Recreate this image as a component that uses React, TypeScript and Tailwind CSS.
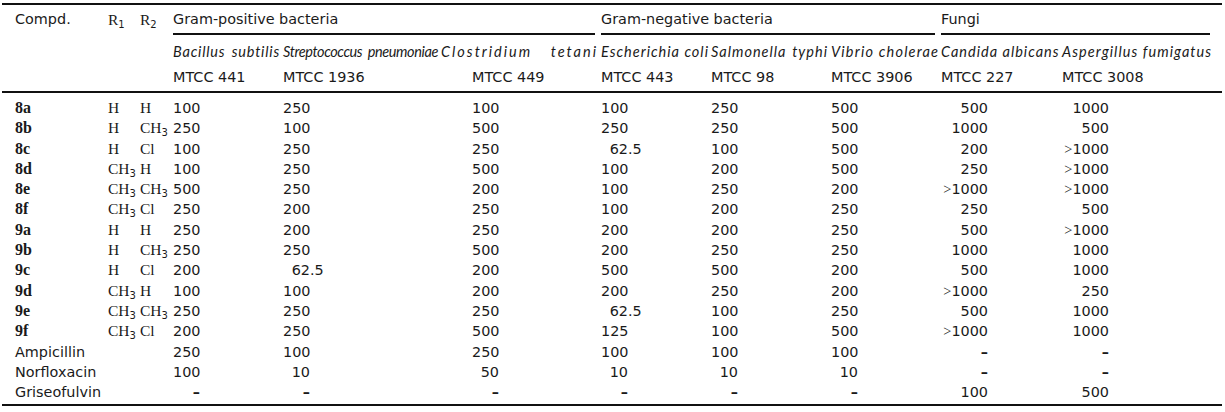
import type { ReactNode } from 'react';

const COLS = 'grid grid-cols-[106px_32px_33px_110px_158px_160px_110px_120px_110px_121px_160px]';
const SANS = "font-['DejaVu_Sans',sans-serif]";
const SERIF = "font-['Liberation_Serif',serif]";
const ITAL = "font-['Lato',sans-serif] italic text-[14.5px]";

// alignment box for the integer part of each value column
const BOX = [
  'w-[27px]',
  'w-[27px]',
  'ml-[31px] w-[27px]',
  'w-[27px]',
  'w-[27px]',
  'w-[27px]',
  'w-[47px]',
  'w-[47px]',
];

type Sub = 'H' | 'CH3' | 'Cl' | '';

interface Row {
  id:   string;
  bold: boolean;
  r1:   Sub;
  r2:   Sub;
  vals: string[];
}

const ROWS: Row[] = [
  { id: '8a', bold: true, r1: 'H',   r2: 'H',   vals: ['100', '250', '100', '100',  '250', '500', '500',   '1000'] },
  { id: '8b', bold: true, r1: 'H',   r2: 'CH3', vals: ['250', '100', '500', '250',  '250', '500', '1000',  '500'] },
  { id: '8c', bold: true, r1: 'H',   r2: 'Cl',  vals: ['100', '250', '250', '62.5', '100', '500', '200',   '>1000'] },
  { id: '8d', bold: true, r1: 'CH3', r2: 'H',   vals: ['100', '250', '500', '100',  '200', '500', '250',   '>1000'] },
  { id: '8e', bold: true, r1: 'CH3', r2: 'CH3', vals: ['500', '250', '200', '100',  '250', '200', '>1000', '>1000'] },
  { id: '8f', bold: true, r1: 'CH3', r2: 'Cl',  vals: ['250', '200', '250', '100',  '200', '250', '250',   '500'] },
  { id: '9a', bold: true, r1: 'H',   r2: 'H',   vals: ['250', '200', '250', '200',  '200', '250', '500',   '>1000'] },
  { id: '9b', bold: true, r1: 'H',   r2: 'CH3', vals: ['250', '250', '500', '200',  '250', '250', '1000',  '1000'] },
  { id: '9c', bold: true, r1: 'H',   r2: 'Cl',  vals: ['200', '62.5', '200', '500', '500', '200', '500',   '1000'] },
  { id: '9d', bold: true, r1: 'CH3', r2: 'H',   vals: ['100', '100', '200', '200',  '250', '200', '>1000', '250'] },
  { id: '9e', bold: true, r1: 'CH3', r2: 'CH3', vals: ['250', '250', '250', '62.5', '100', '250', '500',   '1000'] },
  { id: '9f', bold: true, r1: 'CH3', r2: 'Cl',  vals: ['200', '250', '500', '125',  '100', '500', '>1000', '1000'] },
  { id: 'Ampicillin',   bold: false, r1: '', r2: '', vals: ['250', '100', '250', '100', '100', '100', '–', '–'] },
  { id: 'Norfloxacin',  bold: false, r1: '', r2: '', vals: ['100', '10',  '50',  '10',  '10',  '10',  '–', '–'] },
  { id: 'Griseofulvin', bold: false, r1: '', r2: '', vals: ['–',   '–',   '–',   '–',   '–',   '–',   '100', '500'] },
];

const SPECIES: { name: string; cls: string }[] = [
  { name: 'Bacillus subtilis',        cls: 'col-start-4 w-[107px] tracking-[0.8px]' },
  { name: 'Streptococcus pneumoniae', cls: 'w-[155px] tracking-[-0.4px]' },
  { name: 'Clostridium tetani',       cls: 'w-[157px] tracking-[2px]' },
  { name: 'Escherichia coli',         cls: 'w-[107px] tracking-[1px]' },
  { name: 'Salmonella typhi',         cls: 'w-[117px] tracking-[1px]' },
  { name: 'Vibrio cholerae',          cls: 'w-[107px] tracking-[1.2px]' },
  { name: 'Candida albicans',         cls: 'w-[118px] tracking-[1px]' },
  { name: 'Aspergillus fumigatus',    cls: 'w-[149px] tracking-[1.05px]' },
];

const STRAINS: { name: string; cls: string }[] = [
  { name: 'MTCC 441',  cls: 'col-start-4' },
  { name: 'MTCC 1936', cls: '' },
  { name: 'MTCC 449',  cls: 'pl-[31px]' },
  { name: 'MTCC 443',  cls: '' },
  { name: 'MTCC 98',   cls: '' },
  { name: 'MTCC 3906', cls: '' },
  { name: 'MTCC 227',  cls: '' },
  { name: 'MTCC 3008', cls: '' },
];

function Subscript({ children }: { children: ReactNode }) {
  return <span className={`${SANS} text-[10px] leading-[0] align-[-3px]`}>{children}</span>;
}

function Substituent({ s }: { s: Sub }) {
  if (s === 'CH3') return <span className={SERIF}>CH<Subscript>3</Subscript></span>;
  return <span className={SERIF}>{s}</span>;
}

function Val({ v, box }: { v: string; box: string }) {
  let main: ReactNode = v;
  let frac = '';
  if (v === '–') {
    main = <span className="font-bold">–</span>;
  } else if (v.startsWith('>')) {
    main = <><span className={SERIF}>&gt;</span>{v.slice(1)}</>;
  } else if (v.includes('.')) {
    const [a, b] = v.split('.');
    main = a;
    frac = `.${b}`;
  }
  return (
    <div className="flex items-baseline whitespace-nowrap">
      <span className={`${box} text-right`}>{main}</span>
      {frac && <span>{frac}</span>}
    </div>
  );
}

export default function App() {
  return (
    <div className="w-[1225px] h-[412px] bg-white">
      <div className={`ml-[2px] mt-[3px] w-[1220px] border-y-2 border-[#111] text-[#1a1a1a] text-[14.4px] ${SANS}`}>
        {/* group headings */}
        <div className={`${COLS} items-start`}>
          <div className="h-[28px] pt-[2px] pl-[13px] flex items-center">Compd.</div>
          <div className="h-[28px] pt-[2px] flex items-center">
            <span><span className={`${SERIF} text-[15.5px]`}>R</span><Subscript>1</Subscript></span>
          </div>
          <div className="h-[28px] pt-[2px] flex items-center">
            <span><span className={`${SERIF} text-[15.5px]`}>R</span><Subscript>2</Subscript></span>
          </div>
          <div className="col-span-3 h-[30px] pt-[2px] mr-[6px] border-b-2 border-[#111] flex items-center">Gram-positive bacteria</div>
          <div className="col-span-3 h-[30px] pt-[2px] mr-[6px] border-b-2 border-[#111] flex items-center">Gram-negative bacteria</div>
          <div className="col-span-2 h-[30px] pt-[2px] mr-[12px] border-b-2 border-[#111] flex items-center">Fungi</div>
        </div>

        {/* species */}
        <div className={`${COLS} h-[29px] pt-[4px] items-center`}>
          {SPECIES.map((s) => (
            <div key={s.name} className={`${s.cls} ${ITAL} whitespace-nowrap [text-align-last:justify]`}>
              {s.name}
            </div>
          ))}
        </div>

        {/* strains */}
        <div className={`${COLS} h-[27px] items-center border-b-2 border-[#111] box-content`}>
          {STRAINS.map((s) => (
            <div key={s.name} className={`${s.cls} whitespace-nowrap`}>{s.name}</div>
          ))}
        </div>

        {/* data */}
        <div className="pt-[5px] pb-[2px]">
          {ROWS.map((r) => (
            <div key={r.id} className={`${COLS} h-[20.3px] items-baseline leading-[20px]`}>
              <div className="pl-[13px]">
                {r.bold ? <span className={`${SERIF} font-bold text-[16px]`}>{r.id}</span> : r.id}
              </div>
              <div className="text-[15.5px]"><Substituent s={r.r1} /></div>
              <div className="text-[15.5px]"><Substituent s={r.r2} /></div>
              {r.vals.map((v, i) => (
                <Val key={i} v={v} box={BOX[i]} />
              ))}
            </div>
          ))}
        </div>
      </div>
    </div>
  );
}
